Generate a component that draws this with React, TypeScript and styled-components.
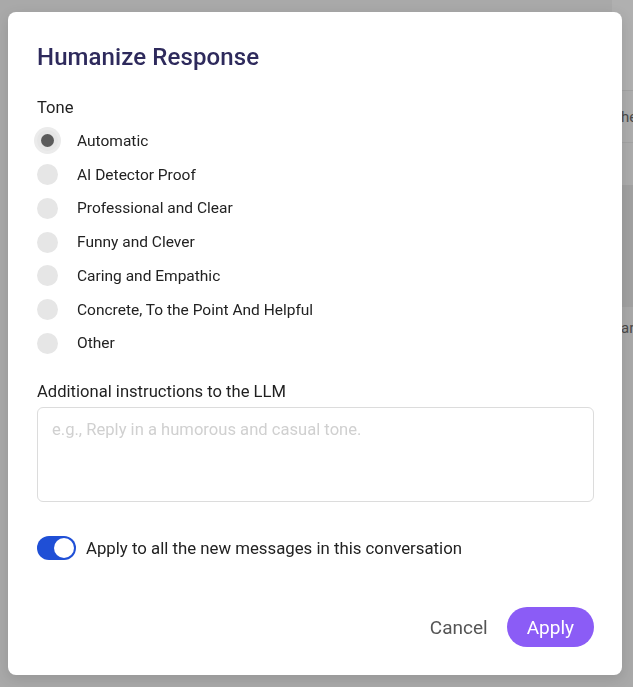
import React, { useState } from "react";
import styled, { createGlobalStyle } from "styled-components";

const GlobalStyle = createGlobalStyle`
  html, body { margin: 0; padding: 0; }
  body {
    width: 633px;
    height: 687px;
    overflow: hidden;
    font-family: Roboto, "Liberation Sans", Arial, sans-serif;
    background: #a9a9a9;
  }
  * { box-sizing: border-box; }
`;

/* ---------- background page (dimmed, behind the modal) ---------- */

const Page = styled.div`
  width: 633px;
  height: 687px;
  display: flex;
  flex-direction: column;
  padding-left: 612px;
  background: #a9a9a9;
  overflow: hidden;
`;

const PageBand = styled.div<{ $h: number; $bg: string; $line?: boolean; $indent?: number }>`
  height: ${(p) => p.$h}px;
  flex: none;
  background: ${(p) => p.$bg};
  border-bottom: ${(p) => (p.$line ? "1px solid #a2a2a2" : "none")};
  display: flex;
  align-items: center;
  font-size: 15px;
  color: #4a4a4a;
  white-space: nowrap;
  padding-left: ${(p) => p.$indent ?? 4}px;
`;

/* ---------- modal ---------- */

const Overlay = styled.div`
  position: fixed;
  inset: 0;
  display: flex;
  align-items: flex-start;
  padding: 12px 11px 12px 8px;
`;

const Dialog = styled.div`
  width: 614px;
  height: 663px;
  background: #ffffff;
  border-radius: 8px;
  box-shadow: 0 4px 14px rgba(0, 0, 0, 0.12);
  padding: 31px 28px 28px 29px;
  display: flex;
  flex-direction: column;
`;

const Title = styled.h2`
  margin: 0;
  font-size: 24px;
  font-weight: 500;
  line-height: 28px;
  color: #2e2a5c;
  letter-spacing: 0.1px;
`;

const SectionLabel = styled.div<{ $mt: number }>`
  margin-top: ${(p) => p.$mt}px;
  font-size: 16.6px;
  line-height: 20px;
  color: #1f1f1f;
`;

const RadioList = styled.div`
  display: flex;
  flex-direction: column;
  margin-top: 6px;
`;

const RadioRow = styled.label`
  height: 33.75px;
  display: flex;
  align-items: center;
  gap: 19px;
  cursor: pointer;
`;

const RadioDot = styled.span<{ $checked: boolean }>`
  width: 21px;
  height: 21px;
  flex: none;
  border-radius: 50%;
  background: #e6e6e6;
  display: flex;
  align-items: center;
  justify-content: center;
  box-shadow: ${(p) => (p.$checked ? "0 0 0 3px #ebebeb" : "none")};

  &::after {
    content: "";
    width: 13px;
    height: 13px;
    border-radius: 50%;
    background: #5b5b5b;
    display: ${(p) => (p.$checked ? "block" : "none")};
  }
`;

const RadioText = styled.span`
  font-size: 15.5px;
  color: #222222;
  line-height: 20px;
`;

const TextArea = styled.textarea`
  margin-top: 5px;
  height: 95px;
  width: 100%;
  resize: none;
  border: 1px solid #dcdcdc;
  border-radius: 6px;
  padding: 12px 14px;
  font-family: inherit;
  font-size: 16.6px;
  line-height: 20px;
  color: #222;
  outline: none;

  &::placeholder {
    color: #d0d0d0;
  }
`;

const ToggleRow = styled.label`
  margin-top: 34px;
  display: flex;
  align-items: center;
  gap: 10px;
  cursor: pointer;
`;

const Switch = styled.span<{ $on: boolean }>`
  width: 39px;
  height: 24px;
  flex: none;
  border-radius: 12px;
  background: ${(p) => (p.$on ? "#1f4fd6" : "#c8c8c8")};
  display: flex;
  align-items: center;
  justify-content: ${(p) => (p.$on ? "flex-end" : "flex-start")};
  padding: 2px;

  &::after {
    content: "";
    width: 20px;
    height: 20px;
    border-radius: 50%;
    background: #ffffff;
  }
`;

const ToggleText = styled.span`
  font-size: 16.8px;
  color: #222222;
  line-height: 20px;
`;

const Footer = styled.div`
  margin-top: auto;
  display: flex;
  justify-content: flex-end;
  align-items: center;
  gap: 19px;
`;

const TextButton = styled.button`
  border: none;
  background: transparent;
  font-family: inherit;
  font-size: 19px;
  color: #555555;
  padding: 0;
  cursor: pointer;
`;

const PrimaryButton = styled.button`
  border: none;
  height: 40px;
  padding: 0 20px;
  border-radius: 20px;
  background: #8b5cf6;
  color: #ffffff;
  font-family: inherit;
  font-size: 19px;
  cursor: pointer;
`;

const tones = [
  "Automatic",
  "AI Detector Proof",
  "Professional and Clear",
  "Funny and Clever",
  "Caring and Empathic",
  "Concrete, To the Point And Helpful",
  "Other",
];

export default function App() {
  const [tone, setTone] = useState("Automatic");
  const [applyAll, setApplyAll] = useState(true);

  return (
    <>
      <GlobalStyle />
      <Page>
        <PageBand $h={91} $bg="#b0b0b0" $line />
        <PageBand $h={52} $bg="#adadad" $line>
          the
        </PageBand>
        <PageBand $h={42} $bg="#acacac" />
        <PageBand $h={122} $bg="#a1a1a1" />
        <PageBand $h={42} $bg="#a9a9a9" $indent={9}>
          ar
        </PageBand>
      </Page>
      <Overlay>
        <Dialog role="dialog" aria-label="Humanize Response">
          <Title>Humanize Response</Title>
          <SectionLabel $mt={27}>Tone</SectionLabel>
          <RadioList>
            {tones.map((t) => (
              <RadioRow key={t} onClick={() => setTone(t)}>
                <RadioDot $checked={tone === t} />
                <RadioText>{t}</RadioText>
              </RadioRow>
            ))}
          </RadioList>
          <SectionLabel $mt={22}>Additional instructions to the LLM</SectionLabel>
          <TextArea placeholder="e.g., Reply in a humorous and casual tone." />
          <ToggleRow onClick={() => setApplyAll((v) => !v)}>
            <Switch $on={applyAll} />
            <ToggleText>Apply to all the new messages in this conversation</ToggleText>
          </ToggleRow>
          <Footer>
            <TextButton>Cancel</TextButton>
            <PrimaryButton>Apply</PrimaryButton>
          </Footer>
        </Dialog>
      </Overlay>
    </>
  );
}
